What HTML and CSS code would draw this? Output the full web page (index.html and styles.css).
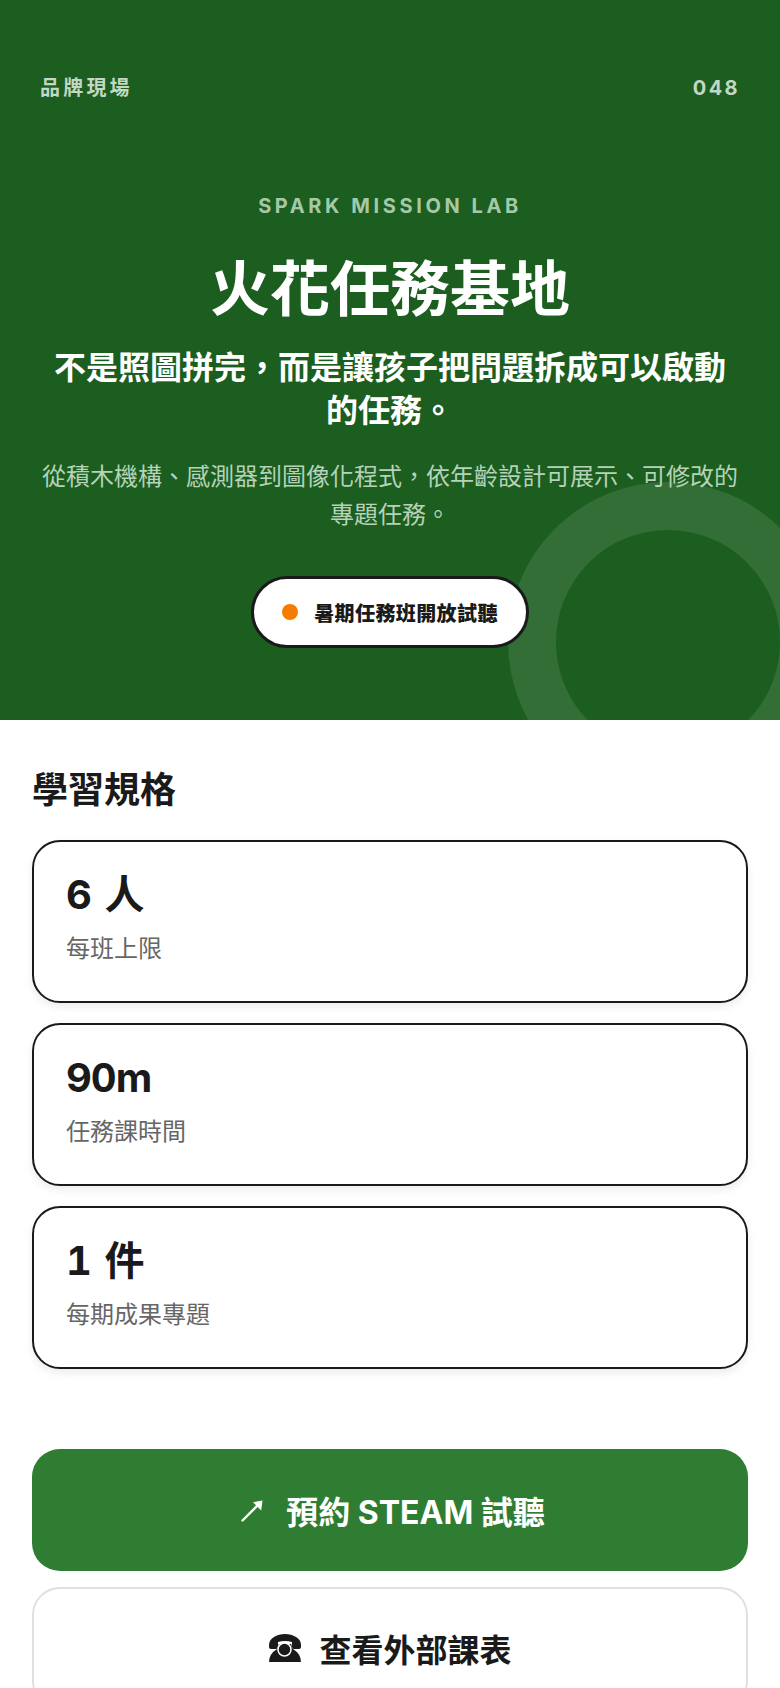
FILE: index.html
```html
<!DOCTYPE html>
<html lang="zh-Hant">
<head>
    <meta charset="UTF-8">
    <title>火花任務基地</title>
    <link rel="stylesheet" href="styles.css">
</head>
<body>
<div class="page">
    <header class="hero">
        <div class="ring"></div>
        <div class="top">
            <span class="brand">品牌現場</span>
            <span>048</span>
        </div>
        <p class="eyebrow">SPARK MISSION LAB</p>
        <h1>火花任務基地</h1>
        <p class="sub">不是照圖拼完&#65292;而是讓孩子把問題拆成可以啟動的任務。</p>
        <p class="desc">從積木機構、感測器到圖像化程式&#65292;依年齡設計可展示、可修改的專題任務。</p>
        <div class="pill"><i class="dot"></i>暑期任務班開放試聽</div>
    </header>
    <section class="specs">
        <h2>學習規格</h2>
        <div class="card">
            <div class="num">6 人</div>
            <div class="label">每班上限</div>
        </div>
        <div class="card">
            <div class="num">90m</div>
            <div class="label">任務課時間</div>
        </div>
        <div class="card">
            <div class="num">1 件</div>
            <div class="label">每期成果專題</div>
        </div>
    </section>
    <div class="actions">
        <a class="btn primary">
            <svg class="arrow" width="24" height="24" viewBox="0 0 24 24">
                <path d="M2.5 22.5L20.5 4.5" fill="none" stroke="#fff" stroke-width="2.4" stroke-linecap="round"/>
                <path d="M13 4.2L22.5 2.5L21.2 12.5Z" fill="#fff"/>
            </svg>
            預約 STEAM 試聽
        </a>
        <a class="btn ghost">
            <svg class="phone" width="34" height="28" viewBox="0 0 34 28">
                <path d="M1 11C1 4 9 0 17 0C25 0 33 4 33 11V13Q33 15 31 15H26Q24 15 24 12V8Q17 6 10 8V12Q10 15 8 15H3Q1 15 1 13Z" fill="#1a1a1a"/>
                <path d="M11 10H23L25 15Q33 20 33 28H1Q1 20 9 15Z" fill="#1a1a1a"/>
                <circle cx="16.5" cy="15.5" r="6.5" fill="#1a1a1a" stroke="#fff" stroke-width="1.5"/>
            </svg>
            查看外部課表
        </a>
    </div>
</div>
</body>
</html>
```

FILE: styles.css
```css
*{
    margin: 0;
    padding: 0;
    box-sizing: border-box;
}
body{
    font-family: "Inter", "Noto Sans CJK TC", sans-serif;
    color: #1a1a1a;
    background: #fff;
}
.page{
    height: 100vh;
    overflow: hidden;
}
.hero{
    position: relative;
    overflow: hidden;
    height: 720px;
    padding: 72px 40px 0;
    background: #1b5e20;
    color: #fff;
    text-align: center;
}
.ring{
    position: absolute;
    right: -48px;
    bottom: -82px;
    width: 320px;
    height: 320px;
    border: 48px solid rgba(255,255,255,.1);
    border-radius: 50%;
}
.top{
    display: flex;
    justify-content: space-between;
    font-size: 20px;
    font-weight: 700;
    line-height: 32px;
    letter-spacing: 2.4px;
    color: #c2d8c3;
}
.brand{
    letter-spacing: 3.2px;
}
.eyebrow{
    margin-top: 88px;
    font-size: 20px;
    font-weight: 700;
    line-height: 28px;
    letter-spacing: 3.6px;
    color: #a5c9a7;
}
h1{
    margin-top: 29px;
    font-size: 60px;
    font-weight: 700;
    line-height: 80px;
}
.sub{
    margin-top: 17px;
    font-size: 32px;
    font-weight: 700;
    line-height: 43px;
}
.desc{
    position: relative;
    margin-top: 26px;
    font-size: 24px;
    line-height: 38px;
    color: #b6d2b8;
}
.pill{
    position: relative;
    display: inline-flex;
    align-items: center;
    gap: 16px;
    height: 72px;
    margin-top: 42px;
    padding: 0 28px;
    border: 3px solid #1a1a1a;
    border-radius: 36px;
    background: #fff;
    color: #1a1a1a;
    font-size: 20px;
    font-weight: 900;
    letter-spacing: .4px;
}
.dot{
    width: 16px;
    height: 16px;
    border-radius: 50%;
    background: #f57c00;
}
.specs{
    padding: 44px 32px 0;
}
h2{
    font-size: 36px;
    font-weight: 700;
    line-height: 52px;
    margin-bottom: 24px;
}
.card{
    height: 163px;
    margin-bottom: 20px;
    padding: 25px 32px;
    border: 2px solid #1a1a1a;
    border-radius: 28px;
    background: #fff;
    box-shadow: 0 4px 8px rgba(0,0,0,.08);
}
.num{
    font-size: 40px;
    font-weight: 700;
    line-height: 56px;
    letter-spacing: -1px;
    word-spacing: 4px;
    font-variant-numeric: tabular-nums;
}
.label{
    margin-top: 8px;
    font-size: 24px;
    line-height: 36px;
    color: #666;
}
.actions{
    padding: 60px 32px 0;
}
.btn{
    display: flex;
    align-items: center;
    justify-content: center;
    height: 122px;
    border-radius: 28px;
    font-size: 32px;
    font-weight: 700;
}
.primary{
    gap: 22px;
    padding-left: 5px;
    background: #2e7d32;
    color: #fff;
}
.ghost{
    gap: 17px;
    margin-top: 16px;
    border: 2px solid #e0e0e0;
    color: #1a1a1a;
}
```
